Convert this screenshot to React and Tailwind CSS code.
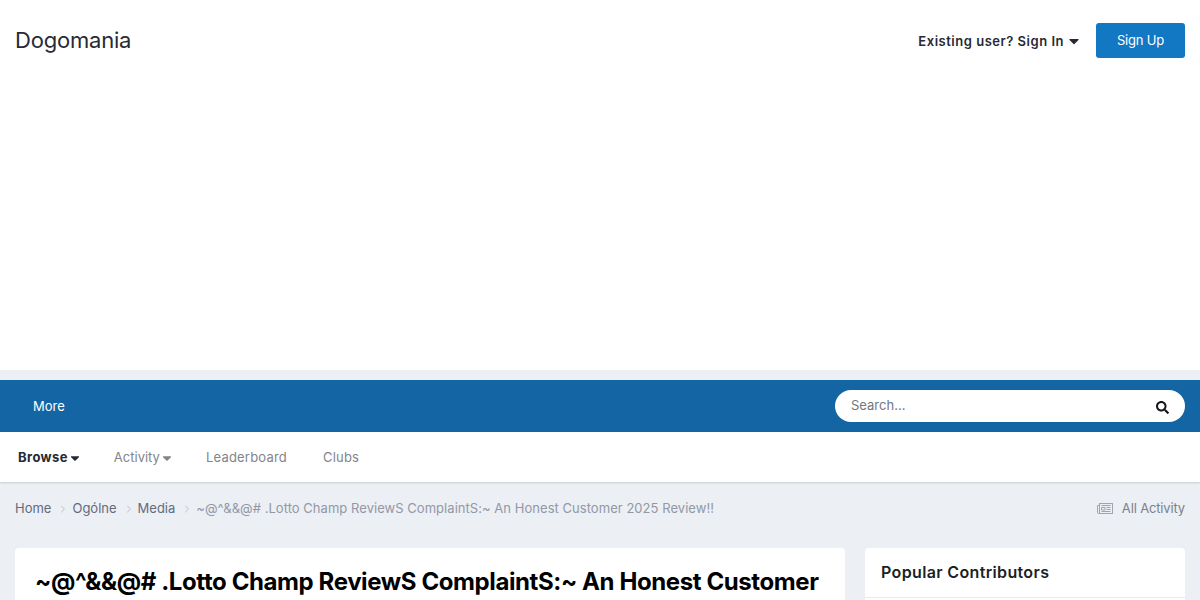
import React from "react";
import { FaCaretDown, FaSearch } from "react-icons/fa";
import { ChevronRight } from "lucide-react";

const crumbs = ["Home", "Ogólne", "Media"];

const App = () => {
  return (
    <div className="h-[600px] overflow-hidden bg-[#eceff4] font-['Inter',sans-serif] text-[#272a34]">
      {/* Header + empty ad space */}
      <header className="h-[370px] bg-white">
        <div className="flex h-[81px] items-center justify-between pl-[15px] pr-[15px]">
          <a className="-mt-[2px] text-[22px] leading-[28px] tracking-[-0.2px] text-[#272a34]">Dogomania</a>
          <div className="flex items-center">
            <a className="flex items-center text-[13px] font-semibold tracking-[0.52px] text-[#272a34]">
              <span className="pt-[2px]">Existing user? Sign In</span>
              <FaCaretDown className="ml-[2px] mt-[1px] text-[16px]" />
            </a>
            <button className="ml-[14px] h-[35px] w-[89px] rounded-[3px] bg-[#1378c4] text-[13px] tracking-[-0.2px] text-white">
              Sign Up
            </button>
          </div>
        </div>
      </header>

      {/* Primary nav */}
      <nav className="mt-[10px] flex h-[52px] items-center justify-between bg-[#1366a3] pl-[33px] pr-[15px]">
        <a className="pt-[2px] text-[13px] text-white">More</a>
        <div className="flex h-[32px] w-[350px] items-center justify-between rounded-full bg-white pl-[16px] pr-[16px]">
          <span className="text-[13px] text-[#737680]">Search...</span>
          <FaSearch className="mt-[2px] text-[13px] text-[#16181d]" />
        </div>
      </nav>

      {/* Secondary nav */}
      <div className="flex h-[50px] items-center bg-white pl-[18px] pt-[2px] text-[13px] tracking-[0.2px] text-[#81848c] shadow-[0_1px_2px_rgba(0,0,0,0.15)]">
        <a className="flex items-center font-bold tracking-[0.4px] text-[#272a34]">
          Browse
          <FaCaretDown className="text-[14px]" />
        </a>
        <a className="ml-[32px] flex items-center tracking-[0px]">
          Activity
          <FaCaretDown className="text-[14px]" />
        </a>
        <a className="ml-[32px]">Leaderboard</a>
        <a className="ml-[36px]">Clubs</a>
      </div>

      {/* Breadcrumbs */}
      <div className="flex h-[52px] items-center justify-between pl-[15px] pr-[15px] pt-[1px] text-[13px]">
        <ul className="flex items-center text-[#636b7c]">
          {crumbs.map((c) => (
            <li key={c} className="flex items-center">
              {c}
              <ChevronRight size={12} strokeWidth={1.5} className="ml-[6px] mr-[3px] text-[#a7acb8]" />
            </li>
          ))}
          <li className="tracking-[0.04px] text-[#9298a6]">~@^&amp;&amp;@# .Lotto Champ ReviewS ComplaintS:~ An Honest Customer 2025 Review!!</li>
        </ul>
        <a className="flex items-center tracking-[-0.15px] text-[#7b8190]">
          <svg width="16" height="11" viewBox="0 0 16 11" fill="none" stroke="#a0a5b2" strokeWidth="1" className="mr-[9px]">
            <rect x="2.5" y="0.5" width="13" height="10" />
            <path d="M2.5 2.5H0.5V9.5A1 1 0 0 0 2.5 9.5M4.5 2.5H13.5M4.5 4.5H8V7H4.5ZM9.5 4.5H13.5M9.5 6.5H13.5M4.5 8.5H13.5" />
          </svg>
          All Activity
        </a>
      </div>

      {/* Content */}
      <div className="mt-[14px] flex gap-[20px] pl-[15px] pr-[15px]">
        <main className="w-[830px] rounded-[4px] bg-white pl-[20px] pr-[20px] pt-[18px]">
          <h1 className="text-[24px] font-bold leading-[32px] tracking-[-0.4px] text-black">
            ~@^&amp;&amp;@# .Lotto Champ ReviewS ComplaintS:~ An Honest Customer 2025 Review!!
          </h1>
        </main>
        <aside className="h-[100px] w-[320px] rounded-[4px] bg-white">
          <h3 className="border-b border-[#e8eaee] pb-[14px] pl-[16px] pt-[13px] text-[16px] font-semibold leading-[22px] tracking-[0.35px] text-[#1d1f26]">
            Popular Contributors
          </h3>
        </aside>
      </div>
    </div>
  );
};

export default App;
